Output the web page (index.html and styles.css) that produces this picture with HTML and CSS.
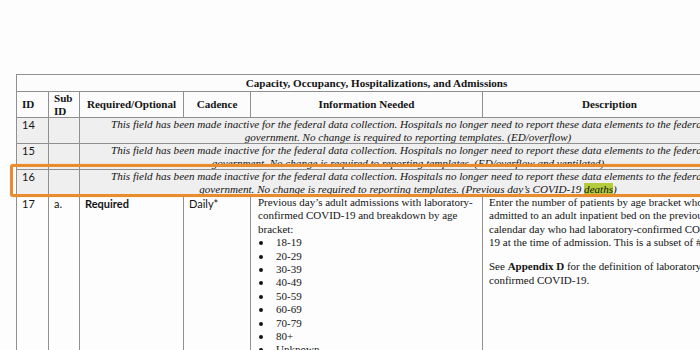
FILE: index.html
```html
<!DOCTYPE html>
<html>
<head>
<meta charset="utf-8">
<link rel="stylesheet" href="styles.css">
</head>
<body>
<div class="page">
  <table class="grid">
    <colgroup>
      <col class="c-id"><col class="c-sub"><col class="c-req"><col class="c-cad"><col class="c-info"><col class="c-desc">
    </colgroup>
    <tr class="title-row"><th colspan="6">Capacity, Occupancy, Hospitalizations, and Admissions</th></tr>
    <tr class="head-row">
      <th class="left">ID</th>
      <th class="left">Sub<br>ID</th>
      <th>Required/Optional</th>
      <th>Cadence</th>
      <th>Information Needed</th>
      <th>Description</th>
    </tr>
    <tr class="inactive">
      <td class="num">14</td><td></td>
      <td colspan="4" class="note">This field has been made inactive for the federal data collection. Hospitals no longer need to report these data elements to the federal<br>government. No change is required to reporting templates. (ED/overflow)</td>
    </tr>
    <tr class="inactive">
      <td class="num">15</td><td></td>
      <td colspan="4" class="note">This field has been made inactive for the federal data collection. Hospitals no longer need to report these data elements to the federal<br>government. No change is required to reporting templates. (ED/overflow and ventilated)</td>
    </tr>
    <tr class="inactive r16">
      <td class="num">16</td><td></td>
      <td colspan="4" class="note">This field has been made inactive for the federal data collection. Hospitals no longer need to report these data elements to the federal<br>government. No change is required to reporting templates. (Previous day’s COVID-19 <span class="hl">deaths</span>)</td>
    </tr>
    <tr class="body-row">
      <td class="num">17</td>
      <td class="num">a.</td>
      <td class="sans bold">Required</td>
      <td class="sans">Daily*</td>
      <td class="info">
        <p>Previous day’s adult admissions with laboratory-<br>confirmed COVID-19 and breakdown by age<br>bracket:</p>
        <ul class="ages">
          <li>18-19</li><li>20-29</li><li>30-39</li><li>40-49</li><li>50-59</li><li>60-69</li><li>70-79</li><li>80+</li><li>Unknown</li>
        </ul>
      </td>
      <td class="desc">
        <p>Enter the number of patients by age bracket who were<br>admitted to an adult inpatient bed on the previous<br>calendar day who had laboratory-confirmed COVID-<br>19 at the time of admission. This is a subset of #</p>
        <p>See <b>Appendix D</b> for the definition of laboratory-<br>confirmed COVID-19.</p>
      </td>
    </tr>
  </table>
  <div class="callout"></div>
</div>
</body>
</html>
```

FILE: styles.css
```css
html, body {
  margin: 0;
  padding: 0;
  background: #fdfdfd;
  overflow: hidden;
}
.page {
  position: relative;
  width: 700px;
  height: 350px;
  overflow: hidden;
  padding: 74px 0 0 16px;
  box-sizing: border-box;
  font-family: "Liberation Serif", "Times New Roman", serif;
  color: #141414;
}
.grid {
  border-collapse: collapse;
  table-layout: fixed;
  width: 720px;
  font-size: 11.1px;
}
.c-id { width: 32px; }
.c-sub { width: 31px; }
.c-req { width: 104px; }
.c-cad { width: 67px; }
.c-info { width: 232px; }
.c-desc { width: 254px; }
.grid th, .grid td {
  border: 1px solid #909090;
  padding: 0;
  vertical-align: top;
}
.title-row th {
  height: 16px;
  line-height: 16px;
  text-align: center;
  background: #fcfcfc;
}
.head-row th {
  height: 23px;
  vertical-align: middle;
  line-height: 12.5px;
  text-align: center;
  background: #fcfcfc;
}
.head-row th.left {
  text-align: left;
  padding-left: 5px;
}
.inactive td {
  background: #efefef;
}
.note {
  font-style: italic;
  text-align: center;
  line-height: 12.5px;
  white-space: nowrap;
  overflow: hidden;
}
.inactive.r16 .note { line-height: 13px; }
.num, .sans {
  font-family: "Lato", "Liberation Sans", sans-serif;
  font-size: 11px;
  line-height: 13px;
  padding: 0 0 0 5px !important;
}
.bold { font-weight: 700; }
.body-row td { background: #fdfdfd; }
.info, .desc {
  font-size: 11px;
  line-height: 13.4px;
  white-space: nowrap;
  overflow: hidden;
}
.info { padding: 0 2px 0 7px !important; }
.desc { padding: 0 2px 0 6px !important; }
.info p, .desc p { margin: 0; }
.info > p:first-child, .desc > p:first-child { margin-top: -1px; }
.desc p + p { margin-top: 10.6px; }
.ages {
  margin: 0;
  padding: 0 0 0 18px;
  list-style: none;
}
.ages li {
  position: relative;
}
.ages li::before {
  content: "";
  position: absolute;
  left: -17px;
  top: 5px;
  width: 4px;
  height: 4px;
  border-radius: 50%;
  background: #141414;
}
.hl {
  background: #b2cc3b;
}
.callout {
  position: absolute;
  left: 10px;
  top: 164px;
  width: 720px;
  height: 27px;
  border: 3px solid #e88c2e;
  border-radius: 3px;
  box-shadow: 0 0 1px #e88c2e;
}
```
